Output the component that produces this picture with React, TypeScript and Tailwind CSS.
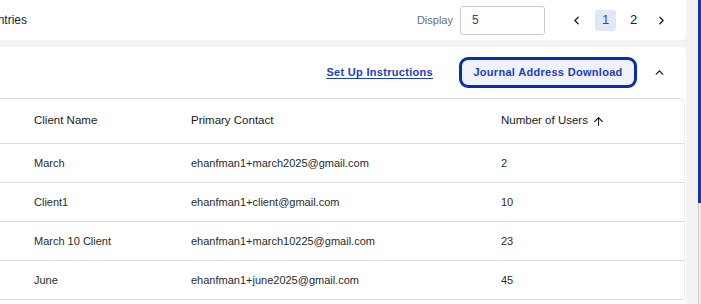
import { ChevronLeft, ChevronRight, ChevronUp, ArrowUp } from 'lucide-react';

const ROWS = [
  { name: 'March', contact: 'ehanfman1+march2025@gmail.com', users: '2' },
  { name: 'Client1', contact: 'ehanfman1+client@gmail.com', users: '10' },
  { name: 'March 10 Client', contact: 'ehanfman1+march10225@gmail.com', users: '23' },
  { name: 'June', contact: 'ehanfman1+june2025@gmail.com', users: '45' },
];

export default function App() {
  return (
    <div className="flex h-[304px] w-[701px] overflow-hidden bg-[#f3f3f3] font-['Liberation_Sans',Arial,sans-serif]">
      <div className="flex w-[686px] shrink-0 flex-col">
        {/* Entries / pagination bar */}
        <div className="flex h-[40px] items-center rounded-br-[5px] bg-white">
          <div className="flex w-[27px] justify-end overflow-hidden whitespace-nowrap text-[12px] text-[#222]">
            Showing 1 to 5 of 8 entries
          </div>
          <div className="ml-auto flex items-center">
            <span className="text-[11px] text-[#6e6e6e]">Display</span>
            <div className="ml-[7px] flex h-[29px] w-[85px] items-center rounded-[3px] border border-[#c9c9c9] pl-[11px] text-[12px] text-[#444]">
              5
            </div>
            <div className="ml-[21px] flex items-center">
              <button className="flex h-[21px] w-[21px] items-center justify-center text-[#222]">
                <ChevronLeft size={13} strokeWidth={2.6} />
              </button>
              <button className="ml-[8px] flex h-[21px] w-[21px] items-center justify-center rounded-[3px] bg-[#e2e7f6] text-[13px] text-[#2a4bb8]">
                1
              </button>
              <button className="ml-[7px] flex h-[21px] w-[21px] items-center justify-center text-[13px] text-[#222]">
                2
              </button>
              <button className="ml-[7px] flex h-[21px] w-[21px] items-center justify-center text-[#222]">
                <ChevronRight size={13} strokeWidth={2.6} />
              </button>
            </div>
            <div className="w-[14px]" />
          </div>
        </div>

        {/* Clients card */}
        <div className="mt-[7px] flex flex-1 flex-col rounded-tr-[5px] bg-white">
          <div className="flex h-[51px] items-center justify-end pr-[20px]">
            <a href="#" className="text-[11px] font-semibold tracking-[0.3px] text-[#1c3fc0] underline underline-offset-2">
              Set Up Instructions
            </a>
            <button className="ml-[26px] flex h-[31px] w-[178px] items-center justify-center rounded-[9px] border-[3px] border-[#0a2ea6] bg-[#eff2fb] text-[11px] font-semibold tracking-[0.3px] text-[#1c3fb8]">
              Journal Address Download
            </button>
            <button className="ml-[15px] flex h-[20px] w-[14px] items-center justify-center text-[#222]">
              <ChevronUp size={13} strokeWidth={2.6} />
            </button>
          </div>

          <div className="mr-[1px] rounded-tr-[6px] border-t border-r border-[#e2e2e2] border-r-[#f0f0f0]">
            <div className="grid h-[45px] grid-cols-[191px_310px_1fr] items-center border-b border-[#dedede] text-[11.5px] text-[#1a1a1a]">
              <div className="pl-[34px]">Client Name</div>
              <div>Primary Contact</div>
              <div className="flex items-center gap-[4px]">
                Number of Users
                <ArrowUp size={13} strokeWidth={2} />
              </div>
            </div>
            {ROWS.map((r) => (
              <div
                key={r.name}
                className="grid h-[39px] grid-cols-[191px_310px_1fr] items-center border-b border-[#dedede] text-[11px] text-[#2b2b2b]"
              >
                <div className="pl-[34px]">{r.name}</div>
                <div>{r.contact}</div>
                <div>{r.users}</div>
              </div>
            ))}
          </div>
        </div>
      </div>

      {/* scrollbar */}
      <div className="ml-[12px] flex w-[3px] flex-col">
        <div className="h-[203px] bg-[#0a34c8]" />
        <div className="flex-1 border-l border-[#c9c9c9] bg-[#ececec]" />
      </div>
    </div>
  );
}
